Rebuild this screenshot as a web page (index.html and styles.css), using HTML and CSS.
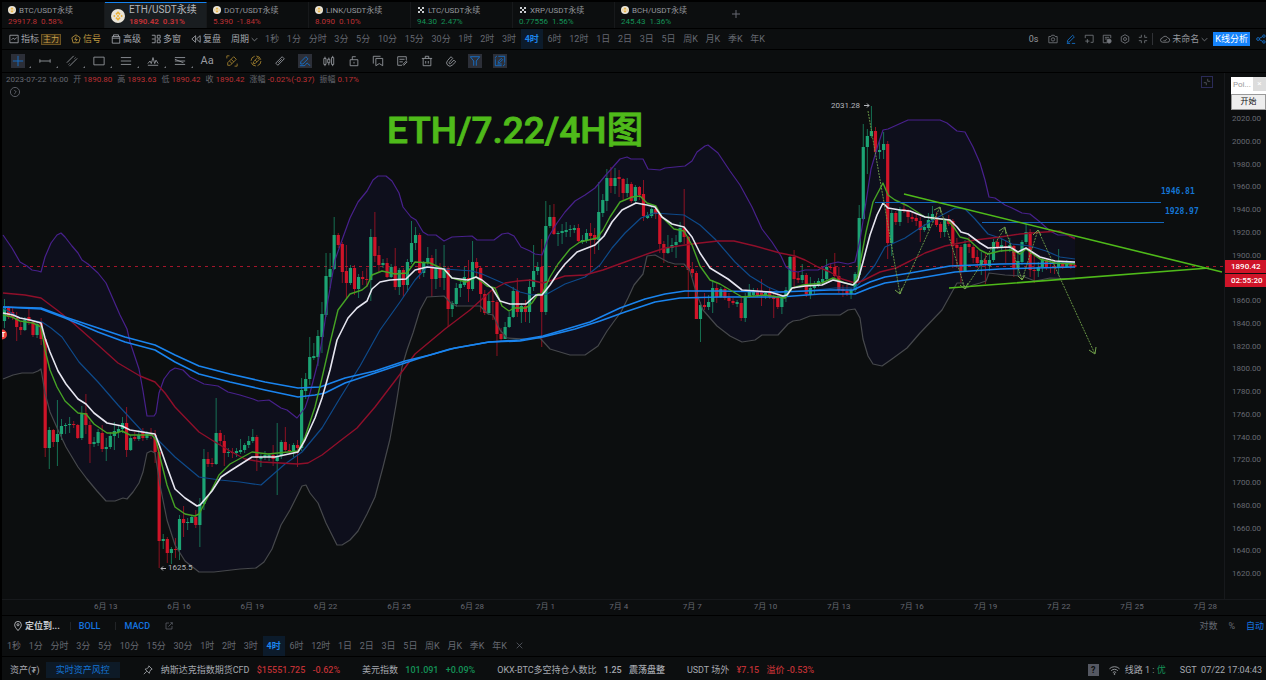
FILE: index.html
```html
<!DOCTYPE html>
<html lang="zh-CN">

<head>
    <meta charset="UTF-8">
    <meta name="viewport" content="width=device-width, initial-scale=1.0">
    <title>ETH/USDT永续</title>
    <link rel="stylesheet" href="styles.css">
</head>

<body>

    <!-- shared icons -->
    <svg class="defs" width="0" height="0">
        <symbol id="coin" viewBox="0 0 16 16">
            <circle cx="8" cy="8" r="8" fill="#e9e4d8" />
            <path d="M8 2.5l3 3-1.3 1.3L8 5.200 6.300 6.800 5 5.500zM8 13.500l3-3-1.300-1.300L8 10.800 6.300 9.200 5 10.500zM8 6.500L9.500 8 8 9.500 6.500 8zM3.800 6.700L5.100 8 3.800 9.300 2.500 8zM12.200 6.700L13.500 8l-1.300 1.300L10.900 8z" fill="#eab038" />
        </symbol>
        <symbol id="okx" viewBox="0 0 16 16">
            <path d="M2 2h4v4H2zM10 2h4v4h-4zM6 6h4v4H6zM2 10h4v4H2zM10 10h4v4h-4z" fill="#c9cccf" />
        </symbol>
        <symbol id="chevron" viewBox="0 0 10 10">
            <path d="M1 3l4 4 4-4" />
        </symbol>
    </svg>

    <nav class="tabs">
        <button class="tab first"><svg class="coin"><use href="#coin" /></svg><span class="pair">BTC/USDT永续</span><span class="quote down">29917.8&nbsp; 0.58%</span></button>
        <button class="tab active"><svg class="coin"><use href="#coin" /></svg><span class="pair">ETH/USDT永续</span><span class="quote down">1890.42&nbsp; 0.31%</span></button>
        <button class="tab"><svg class="coin"><use href="#coin" /></svg><span class="pair">DOT/USDT永续</span><span class="quote down">5.390&nbsp; -1.84%</span></button>
        <button class="tab"><svg class="coin"><use href="#coin" /></svg><span class="pair">LINK/USDT永续</span><span class="quote down">8.090&nbsp; 0.10%</span></button>
        <button class="tab"><svg class="coin"><use href="#okx" /></svg><span class="pair">LTC/USDT永续</span><span class="quote up">94.30&nbsp; 2.47%</span></button>
        <button class="tab"><svg class="coin"><use href="#okx" /></svg><span class="pair">XRP/USDT永续</span><span class="quote up">0.77556&nbsp; 1.56%</span></button>
        <button class="tab last"><svg class="coin"><use href="#coin" /></svg><span class="pair">BCH/USDT永续</span><span class="quote up">245.43&nbsp; 1.36%</span></button>
        <button class="add-tab" aria-label="添加"><svg class="icon" viewBox="0 0 10 10"><path d="M5 1v8M1 5h8" /></svg></button>
    </nav>

    <div class="toolbar">
        <div class="menu">
            <button><svg class="icon" viewBox="0 0 12 12"><path d="M1 1.500h10v9H1zM3 7l2-2 2 1.500L9.500 4" /></svg>指标<span class="main-force">主力</span></button>
            <button class="signal"><svg class="icon" viewBox="0 0 12 12"><path d="M6 1l5 3.500-1.500 6h-7L1 4.500zM6.500 3L4.500 6.500h3L5.500 9" /></svg>信号</button>
            <button><svg class="icon" viewBox="0 0 12 12"><path d="M3 3V1h6v2M1.500 3h9v8h-9zM1.500 5h9" /></svg>高级</button>
            <button><svg class="icon" viewBox="0 0 12 12"><path d="M1 1.500h4v9H1M4.500 6H1M7.500 1.500H11v3.500H7.500zM7.500 7H11v3.500H7.500z" /></svg>多窗</button>
            <button><svg class="icon" viewBox="0 0 12 12"><path d="M5.500 2L1 6l4.500 4zM11 2L6.500 6l4.500 4z" /></svg>复盘</button>
            <button>周期<svg class="icon small"><use href="#chevron" /></svg></button>
        </div>
        <div class="periods">
            <button>1秒</button><button>1分</button><button>分时</button><button>3分</button><button>5分</button><button>10分</button><button>15分</button><button>30分</button><button>1时</button><button>2时</button><button>3时</button><button class="active">4时</button><button>6时</button><button>12时</button><button>1日</button><button>2日</button><button>3日</button><button>5日</button><button>周K</button><button>月K</button><button>季K</button><button>年K</button>
        </div>
        <div class="actions">
            <span class="timer">0s</span>
            <button aria-label="截图"><svg class="icon" viewBox="0 0 12 12"><path d="M1 3h2.500l1-1.500h3l1 1.500H11v7.500H1z" /><circle cx="6" cy="6.500" r="2" /></svg></button>
            <button class="blue" aria-label="画线"><svg class="icon" viewBox="0 0 12 12"><path d="M2 7.500L8 1.500l2 2-6 6-2.500.5zM1 11.300h4M7 11.300h4" /></svg></button>
            <button aria-label="添加窗口"><svg class="icon" viewBox="0 0 12 12"><path d="M1.500 5V1.500H11v8.500H8M4 6v5M1.500 8.500h5" /></svg></button>
            <button aria-label="列表"><svg class="icon" viewBox="0 0 12 12"><path d="M10.500 5V1.500h-9v9H6M3.500 4h5M3.500 6h3" /><circle cx="8.500" cy="8.500" r="2.500" fill="currentColor" /></svg></button>
            <button aria-label="设置"><svg class="icon" viewBox="0 0 12 12"><path d="M6 .8l4.500 2.500v5.400L6 11.200 1.500 8.700V3.300z" /><circle cx="6" cy="6" r="1.800" /></svg></button>
            <button aria-label="全屏"><svg class="icon" viewBox="0 0 12 12"><path d="M1 4h3V1M8 1v3h3M11 8H8v3M4 11V8H1" /></svg></button>
            <button class="layout"><svg class="icon" viewBox="0 0 14 12"><path d="M4 10.500a3 3 0 0 1-.5-6 4 4 0 0 1 7.300 0 3 3 0 0 1-.5 6zM5 7.500l1.500 1.500L9.500 6" /></svg>未命名<svg class="icon small"><use href="#chevron" /></svg></button>
            <button class="analyse">K线分析</button>
            <button class="blue share" aria-label="分享"><svg class="icon" viewBox="0 0 12 12"><circle cx="2.500" cy="6" r="1.700" /><circle cx="9.500" cy="2.500" r="1.500" /><circle cx="9.500" cy="9.500" r="1.500" /><path d="M4 5.200l4-2M4 6.800l4 2" /></svg></button>
        </div>
    </div>

    <div class="drawbar">
        <button class="more on"><svg class="icon" viewBox="0 0 14 14"><path d="M7 1v12M1 7h12" /></svg></button>
        <button class="more"><svg class="icon" viewBox="0 0 14 14"><path d="M1 7h12M1 5v4M13 5v4" /></svg></button>
        <button class="more"><svg class="icon" viewBox="0 0 14 14"><path d="M1 9l8-8M4 13l9-9M3 11l1-1M10 4l1-1" /></svg></button>
        <button class="more"><svg class="icon" viewBox="0 0 14 14"><path d="M1 2.500h12v9H1z" /></svg></button>
        <button class="more"><svg class="icon" viewBox="0 0 14 14"><path d="M1 3h12M1 7h12M1 11h12" /></svg></button>
        <button class="more"><svg class="icon" viewBox="0 0 14 14"><path d="M1 10l2.500-3L5 10l2-7 2 7 1.500-4L13 10M1 12h12" /></svg></button>
        <button class="more"><svg class="icon" viewBox="0 0 14 14"><path d="M1 3h12M1 5l10 4M1 7h12M1 11h12" /></svg></button>
        <div class="tools">
            <button class="text-tool">Aa</button>
            <button class="gold"><svg class="icon" viewBox="0 0 14 14"><path d="M2 9l7-7 3 3-7 7H2zM6 5l3 3M1 4V1h3M10 13h3v-3M4 7l3 3" /></svg></button>
            <button class="gold"><svg class="icon" viewBox="0 0 14 14"><circle cx="7" cy="7" r="5.800" stroke-dasharray="7 2" /><path d="M4 10V8l5-5 2 2-5 5zM6 6l2 2" /></svg></button>
            <button><svg class="icon" viewBox="0 0 14 14"><path d="M2 9.500L9.500 2 12 4.500 4.500 12zM9 5L5 9" /></svg></button>
            <button class="on"><svg class="icon" viewBox="0 0 14 14"><path d="M2 8l6-6 2.500 2.500-6 6H2zM1 12.500h5c2 0 2-3 3.500-3s1 2.500 3.500 2.500" /></svg></button>
            <button><svg class="icon" viewBox="0 0 14 14"><path d="M1 4h2.500v7H1zM5.500 5H8v4H5.500zM10 3h2.500v8H10zM2.300 2v2M2.300 11v2M6.800 3v2M6.800 9v3M11.300 1v2M11.300 11v2" /></svg></button>
            <button><svg class="icon" viewBox="0 0 14 14"><path d="M2.500 5.500h9v7h-9zM5 5.500V2h4M7 8v2" /></svg></button>
            <button><svg class="icon" viewBox="0 0 14 14"><path d="M1.500 10V1.500H10M4.500 4h8v8.500L8.500 10l-4 2.500z" /></svg></button>
            <button><svg class="icon" viewBox="0 0 14 14"><path d="M12 6V2H2v10h5M4 5h6M4 8h4M8 11l4-4 1 1-4 4z" /></svg></button>
            <button><svg class="icon" viewBox="0 0 14 14"><path d="M1 4h12M5 4V1.500h4V4M2.500 4v8.500h9V4M5.500 7v3M8.500 7v3" /></svg></button>
            <button><svg class="icon" viewBox="0 0 14 14"><path d="M7 2L3 6.500a3.800 3.800 0 0 0 5.500 5.300L12.500 8l-2-2-4 4a1 1 0 0 1-1.500-1.500L9 4z" /></svg></button>
            <button class="on"><svg class="icon" viewBox="0 0 14 14"><path d="M1.500 2h11L8.500 7v5.500M5.500 12.500V7l-4-5" /></svg></button>
            <button class="on"><svg class="icon" viewBox="0 0 14 14"><path d="M5 1.500h7.500V9M9 12.500H1.500V5M1.500 4c0-2 1-2.500 2-2.500M12.500 10c0 2-1 2.500-2 2.500M5 7.500L8.500 4l1.500 1.500L6.500 9H5zM4 10.500h5" /></svg></button>
        </div>
    </div>

    <main class="chart">
        <div class="plot">
            <p class="ohlc">2023-07-22 16:00 <span>开 <b>1890.80</b></span> <span>高 <b>1893.63</b></span> <span>低 <b>1890.42</b></span> <span>收 <b>1890.42</b></span> <span>涨幅 <b>-0.02%(-0.37)</b></span> <span>振幅 <b>0.17%</b></span></p>
            <button class="expand" aria-label="展开"><svg class="icon" viewBox="0 0 12 12"><circle cx="6" cy="6" r="5.500" /><path d="M5 3.500L7.500 6 5 8.500" /></svg></button>
            <button class="restore" aria-label="还原"><svg class="icon" viewBox="0 0 14 14"><path d="M2.500 8H6v3.500M8 2.500V6h3.500" /></svg></button>

            <svg class="canvas" viewBox="2 73 1222 526">
                <polygon id="bandFill" />
                <line class="last-price" x1="2" y1="266.5" x2="1224" y2="266.5" />
                <g id="candles"></g>
                <g id="lines"></g>

                <g class="levels">
                    <line x1="875" y1="202.500" x2="1161" y2="202.500" />
                    <line x1="982" y1="222.500" x2="1164" y2="222.500" />
                    <text x="1161" y="194">1946.81</text>
                    <text x="1165" y="214">1928.97</text>
                </g>
                <path class="trend" d="M904 194L1222 272M949 288L1209 268" />
                <path class="forecast" d="M868 111L900 294L940 207L965 289L1005 228L1022 280L1038 230L1095 354" />
                <path class="arrows" d="M895 290l5 4 2-6M934 210l6-3 1 6M960 285l5 4 3-6M999 231l6-4 1 7M1018 276l4 4 3-5M1033 235l5-5 3 5M1089 350l6 4 1-7" />
                <text class="title" x="387" y="143">ETH/7.22/4H图</text>
                <text class="extreme" x="831" y="108">2031.28</text>
                <text class="extreme" x="168" y="570">1625.5</text>
                <path class="pointer" d="M864 105.500h5M867 103.500l2 2-2 2M166 568.500h-5M163 566.500l-2 2 2 2" />
                <circle cx="2" cy="334.500" r="5" fill="#f0413c" />
                <text class="badge" x="1" y="337">T</text>
            </svg>
        </div>
        <div class="price-axis">
            <span>2020.00</span><span>2000.00</span><span>1980.00</span><span>1960.00</span><span>1940.00</span><span>1920.00</span><span>1900.00</span><span></span><span>1860.00</span><span>1840.00</span><span>1820.00</span><span>1800.00</span><span>1780.00</span><span>1760.00</span><span>1740.00</span><span>1720.00</span><span>1700.00</span><span>1680.00</span><span>1660.00</span><span>1640.00</span><span>1620.00</span>
            <div class="price-tag"><b>1890.42</b><b>02:55:20</b></div>
            <div class="popup"><div class="popup-title">Poi...<i>×</i></div><button>开始</button></div>
        </div>
    </main>

    <div class="date-axis">
        <span>6月 13</span><span>6月 16</span><span>6月 19</span><span>6月 22</span><span>6月 25</span><span>6月 28</span><span>7月 1</span><span>7月 4</span><span>7月 7</span><span>7月 10</span><span>7月 13</span><span>7月 16</span><span>7月 19</span><span>7月 22</span><span>7月 25</span><span>7月 28</span>
    </div>

    <div class="bottom-panel">
        <div class="indicators">
            <button class="locate"><svg class="icon" viewBox="0 0 12 12"><path d="M6 11.500C3 8 2 6.500 2 4.500a4 4 0 0 1 8 0c0 2-1 3.500-4 7z" /><circle cx="6" cy="4.500" r="1.300" /></svg>定位到...</button>
            <button class="indicator">BOLL</button>
            <button class="indicator">MACD</button>
            <button class="edit" aria-label="编辑"><svg class="icon" viewBox="0 0 12 12"><path d="M6 1.500H1.500v9h9V6M5 7l6-6M8 1h3v3" /></svg></button>
            <div class="scale">
                <button>对数</button>
                <button>%</button>
                <button class="active">自动</button>
            </div>
        </div>
        <div class="period-row">
            <div class="periods">
                <button>1秒</button><button>1分</button><button>分时</button><button>3分</button><button>5分</button><button>10分</button><button>15分</button><button>30分</button><button>1时</button><button>2时</button><button>3时</button><button class="active">4时</button><button>6时</button><button>12时</button><button>1日</button><button>2日</button><button>3日</button><button>5日</button><button>周K</button><button>月K</button><button>季K</button><button>年K</button>
            </div>
            <button class="close" aria-label="关闭"><svg class="icon small" viewBox="0 0 10 10"><path d="M1 1l8 8M9 1L1 9" /></svg></button>
        </div>
    </div>

    <footer class="status">
        <span class="assets">资产(₮)</span>
        <button class="risk">实时资产风控</button>
        <svg class="icon pin" viewBox="0 0 12 12"><path d="M7 1l4 4-1.500.5L8 8l-.5 2L2.500 5l2-.5L7 2.500zM4.500 7.500L1 11" /></svg>
        <span class="item">纳斯达克指数期货CFD <b class="down">$15551.725</b> <b class="down">-0.62%</b></span>
        <span class="item">美元指数 <b class="up">101.091</b> <b class="up">+0.09%</b></span>
        <span class="item">OKX-BTC多空持仓人数比 <b>1.25</b> <b>震荡盘整</b></span>
        <span class="item">USDT 场外 <b class="down">¥7.15</b> <b class="down">溢价 -0.53%</b></span>
        <div class="status-right">
            <button class="help" aria-label="帮助">?</button>
            <svg class="icon wifi" viewBox="0 0 14 12"><path d="M1 4.500a8.500 8.500 0 0 1 12 0M3 6.800a5.700 5.700 0 0 1 8 0M5 9a3 3 0 0 1 4 0" /><circle cx="7" cy="10.800" r=".6" /></svg>
            <span>线路 1 : <span class="up">优</span></span>
            <span class="clock">SGT&nbsp; 07/22 17:04:43</span>
        </div>
    </footer>

    <script src="chart.js"></script>
</body>

</html>
```
FILE: styles.css
```css
* {
    box-sizing: border-box;
}

body {
    margin: 0;
    padding: 2px 0 0 2px;
    background: #000;
    color: #666972;
    font-family: Roboto, "Noto Sans CJK SC", sans-serif;
    font-size: 9px;
    line-height: 12px;
    overflow-x: hidden;
}

button {
    padding: 0;
    border: 0;
    background: none;
    color: inherit;
    font: inherit;
    white-space: nowrap;
    cursor: pointer;
}

.defs {
    position: absolute;
}

.icon {
    width: 10px;
    height: 10px;
    flex: none;
    fill: none;
    stroke: currentColor;
    overflow: visible;
}

.icon.small {
    width: 7px;
    height: 7px;
}

.up {
    color: #149257;
}

.down {
    color: #be3034;
}

.blue {
    color: #1475d4;
}

/* symbol tabs */
.tabs,
.toolbar,
.drawbar,
.bottom-panel,
.status {
    background: #0c0e0f;
}

.tabs {
    display: flex;
    height: 26px;
    margin-bottom: 1px;
}

.tab {
    display: grid;
    grid-template-columns: 8px auto;
    align-content: center;
    column-gap: 3px;
    width: 102px;
    padding: 1px 0 0 6px;
    font-size: 8px;
    line-height: 11px;
    text-align: left;
    justify-content: start;
    border-right: 1px solid #17191b;
}

.tab.first {
    width: 103px;
}

.tab.last {
    border-right: 0;
}

.tab .coin {
    width: 8px;
    height: 8px;
    align-self: center;
}

.tab .pair {
    color: #94979d;
}

.tab .quote {
    grid-column: 1 / 3;
}

.tab.active {
    grid-template-columns: 14px auto;
    column-gap: 4px;
    padding-top: 0;
    background: #191d20;
    border-top: 1px solid #1583f0;
    line-height: 12px;
}

.tab.active .coin {
    width: 14px;
    height: 14px;
    grid-row: 1 / 3;
}

.tab.active .pair {
    color: #b3b6bb;
    font-size: 10px;
}

.tab.active .quote {
    grid-column: 2;
    font-weight: 700;
}

.add-tab {
    width: 38px;
}

/* period toolbar */
.toolbar {
    display: flex;
    height: 20px;
    margin-bottom: 1px;
}

.menu {
    display: flex;
    align-items: center;
    gap: 10px;
    padding-left: 7px;
    color: #a3a6ad;
}

.menu button {
    display: flex;
    align-items: center;
    gap: 2px;
}

.main-force {
    padding: 0 1px;
    border: 1px solid #6b5220;
    background: #2f2614;
    color: #c9a04a;
    font-size: 8px;
    line-height: 9px;
}

.menu .signal {
    color: #c09a40;
}

.periods {
    display: flex;
    justify-content: space-between;
    width: 506px;
}

.toolbar .periods {
    margin-left: 4px;
}

.periods button {
    padding: 0 3px;
}

.periods .active {
    padding: 0 4px;
    background: #0c1b2b;
    color: #1c85ec;
    font-weight: 700;
}

.actions {
    display: flex;
    align-items: center;
    gap: 8px;
    margin-left: auto;
    color: #74777d;
}

.actions button {
    display: flex;
    align-items: center;
    gap: 2px;
}

.timer {
    margin-right: 2px;
}

.timer,
.layout {
    color: #94979d;
}

.actions .layout {
    margin: 0 -3px 0 -4px;
    padding-left: 7px;
    border-left: 1px solid #303236;
}

.actions .analyse {
    height: 14px;
    padding: 0 2px;
    background: #1583fb;
    color: #fff;
}

.share {
    margin-left: -2px;
}

/* drawing tools */
.drawbar {
    display: flex;
    align-items: center;
    height: 22px;
    margin-bottom: 1px;
    padding-left: 2px;
    color: #989ba1;
}

.drawbar button {
    display: flex;
    justify-content: center;
}

.drawbar .icon {
    width: 14px;
    height: 14px;
    padding: 1px;
}

.more {
    position: relative;
    width: 27px;
}

.more::after {
    content: "";
    position: absolute;
    right: 0;
    bottom: 0;
    border: 1px solid #74777d;
    border-top-color: transparent;
    border-left-color: transparent;
}

.tools {
    display: flex;
    align-items: center;
    width: 317px;
    margin-left: 2px;
}

.tools button {
    flex: 1;
}

.text-tool {
    font-size: 11px;
}

.drawbar .gold {
    color: #a4822f;
}

.drawbar .on {
    color: #1475d4;
}

.drawbar .on .icon {
    background: #2c2f38;
}

/* chart */
.chart {
    display: grid;
    grid-template-columns: 1fr 42px;
    background: #0c0e0f;
}

.plot {
    position: relative;
}

.canvas {
    display: block;
    width: 100%;
    height: auto;
}

.ohlc {
    position: absolute;
    top: 1px;
    left: 4px;
    margin: 0;
    font-size: 8px;
}

.ohlc span {
    margin-left: 3px;
}

.ohlc b {
    color: #be3034;
    font-weight: 400;
}

.expand {
    position: absolute;
    top: 14px;
    left: 8px;
}

.restore {
    position: absolute;
    top: 3px;
    right: 11px;
    height: 12px;
    border: 1px solid #2b2b58;
}

.restore .icon {
    display: block;
}

#bandFill {
    fill: #0e0f1c;
}

.last-price {
    stroke: #a3152a;
    stroke-dasharray: 3 4;
}

.candle-up {
    fill: #1ca474;
}

.candle-down {
    fill: #cf1428;
}

.wick {
    opacity: 0.65;
}

.line {
    fill: none;
    stroke-linejoin: round;
    stroke-width: 1.2;
}

.band-top {
    stroke: #48218c;
}

.band-bottom {
    stroke: #46484c;
}

.band-mid {
    stroke: #0e4a8a;
}

.ma-red {
    stroke: #8f0f2a;
    stroke-width: 1.4;
}

.ma-blue {
    stroke: #1a84ee;
    stroke-width: 1.6;
}

.ma-green {
    stroke: #46a325;
    stroke-width: 1.4;
}

.ma-white {
    stroke: #e6e6f0;
    stroke-width: 1.6;
}

.levels {
    stroke: #1267bd;
}

.levels text {
    fill: #1475d4;
    stroke: none;
    font: 700 8px "DejaVu Sans Mono", monospace;
}

.trend {
    fill: none;
    stroke: #4fba1a;
    stroke-width: 1.6;
}

.forecast,
.arrows {
    fill: none;
    stroke: #71a14b;
}

.forecast {
    stroke-dasharray: 2 1;
    stroke-width: 0.9;
}

.title {
    fill: #4fba1a;
    stroke: #4fba1a;
    stroke-width: 0.8;
    font-size: 37px;
    font-weight: 500;
}

.extreme {
    fill: #b4b7bc;
    font-size: 8px;
}

.pointer {
    fill: none;
    stroke: #b4b7bc;
}

.badge {
    fill: #fff;
    font-size: 7px;
    font-weight: 700;
}

.price-axis {
    position: relative;
    display: flex;
    flex-direction: column;
    justify-content: space-between;
    padding: 40px 0 19px 7px;
    border-left: 1px solid #17191c;
    font-size: 8px;
}

.price-axis span {
    height: 12px;
}

.price-tag {
    position: absolute;
    top: 187px;
    left: 0;
    right: 0;
}

.price-tag b {
    display: block;
    height: 13px;
    margin-bottom: 1px;
    padding-left: 6px;
    background: #cf1428;
    color: #fff;
    font-weight: 500;
    line-height: 14px;
}

.popup {
    position: absolute;
    top: 4px;
    left: 6px;
    right: 0;
    background: #fff;
}

.popup-title {
    display: flex;
    justify-content: space-between;
    height: 17px;
    padding-left: 2px;
    color: #999;
    font-size: 8px;
    line-height: 16px;
}

.popup-title i {
    width: 13px;
    height: 14px;
    background: #dcdcdc;
    color: #fff;
    font-style: normal;
    line-height: 14px;
    text-align: center;
}

.popup button {
    display: block;
    width: 100%;
    height: 16px;
    border: 1px solid #999;
    background: #eee;
    color: #111;
    line-height: 14px;
}

.date-axis {
    display: grid;
    grid-template-columns: repeat(16, 1fr);
    height: 16px;
    margin-bottom: 1px;
    padding: 0 24px 0 67px;
    background: #0c0e0f;
    border-top: 1px solid #17191c;
    font-size: 8px;
    line-height: 14px;
    text-align: center;
}

/* bottom rows */
.bottom-panel {
    margin-bottom: 1px;
}

.indicators {
    display: flex;
    align-items: center;
    height: 20px;
    padding-left: 11px;
}

.locate {
    display: flex;
    align-items: center;
    gap: 2px;
    padding-right: 10px;
    color: #c5c8cd;
    font-weight: 700;
}

.indicator {
    padding: 0 15px 0 8px;
    border-left: 1px solid #222427;
    color: #1475e0;
    font-weight: 500;
    line-height: 8px;
}

.edit .icon {
    display: block;
    width: 8px;
    height: 8px;
}

.scale {
    display: flex;
    gap: 11px;
    margin-left: auto;
    padding-right: 2px;
}

.scale .active {
    color: #1475e0;
}

.period-row {
    display: flex;
    height: 20px;
    padding-left: 2px;
}

.close {
    margin-left: 6px;
}

.status {
    display: flex;
    align-items: center;
    height: 23px;
    padding: 2px 0 0 8px;
    color: #a6a9af;
    white-space: nowrap;
}

.status b {
    margin-left: 5px;
    font-weight: 500;
}

.risk {
    height: 16px;
    margin-left: 6px;
    padding: 0 10px;
    background: #0d1a27;
    color: #1475d4;
}

.pin {
    margin: 0 8px 0 23px;
}

.item {
    margin-right: 22px;
}

.status-right {
    display: flex;
    align-items: center;
    gap: 4px;
    margin-left: auto;
    padding-right: 4px;
}

.help {
    width: 11px;
    height: 12px;
    margin-right: 5px;
    background: #555862;
    color: #0c0e0f;
    font-weight: 700;
}

.wifi {
    width: 13px;
}

.clock {
    margin-left: 10px;
}
```
FILE: chart.js
```javascript
// one candle each: direction, body top, body bottom, high, low
const candles = `
g 307 321 299 328,r 307 317 306 319,r 312 317 308 320,r 318 327 312 341,r 327 330 322 335,g 320 330 317 331,
r 317 321 309 325,r 322 335 320 337,g 324 335 322 338,r 323 339 318 345,r 339 448 337 457,g 430 448 427 469,
r 430 442 429 447,g 434 442 400 466,g 426 434 419 440,g 425 426 423 434,g 424 425 417 433,r 424 425 421 428,
r 425 438 424 439,g 413 438 406 440,r 413 425 394 434,r 425 444 421 463,g 442 444 437 447,g 432 443 429 446,
r 433 449 425 452,g 447 449 438 461,g 436 447 432 449,g 431 436 422 450,g 429 432 426 438,g 423 429 417 433,
r 423 450 407 457,g 438 450 435 451,r 437 439 432 441,g 435 439 430 441,r 432 438 428 441,g 433 438 431 440,
r 433 436 428 439,r 435 452 430 463,r 452 541 447 568,g 539 541 534 549,r 539 553 537 563,g 549 553 547 564,
r 549 550 538 558,g 519 550 515 560,r 519 523 506 537,g 522 523 518 530,g 517 523 516 523,r 517 525 510 528,
g 504 525 498 547,g 459 504 449 510,r 459 464 452 467,r 463 464 458 467,g 433 464 398 465,r 433 441 430 445,
r 441 453 435 466,g 452 453 448 457,r 452 453 448 458,g 451 453 448 457,g 450 452 439 454,g 445 450 443 453,
g 441 445 436 448,g 437 441 429 443,r 437 458 435 471,g 457 459 454 467,g 455 457 451 460,g 455 457 453 461,
r 455 459 445 466,g 456 461 423 495,g 442 456 440 459,r 442 450 427 453,r 450 451 444 454,g 445 451 443 457,
r 445 448 440 467,g 390 448 378 451,g 379 391 373 399,g 357 379 337 385,g 356 358 343 360,g 336 357 330 366,
g 314 337 302 353,g 276 315 253 317,g 269 277 253 288,g 235 269 217 270,r 235 245 233 248,r 244 272 242 283,
r 271 283 245 298,g 268 283 265 285,r 268 289 265 295,g 277 289 274 298,r 277 279 271 285,r 279 280 268 287,
g 237 280 229 301,r 237 256 212 262,r 255 265 246 273,g 263 265 259 268,r 263 277 258 278,g 267 277 264 278,
r 267 287 248 290,g 270 287 268 295,r 270 285 268 297,g 262 285 259 292,g 243 262 221 264,g 235 243 227 250,
r 235 273 233 279,g 263 273 261 277,g 258 263 247 265,r 258 279 255 297,g 267 279 249 289,r 267 278 263 287,
g 268 278 245 290,r 268 309 266 327,g 303 309 301 317,g 288 304 283 307,g 284 288 281 297,g 277 285 267 287,
r 278 289 260 302,g 262 289 241 291,r 262 268 258 277,r 268 294 266 312,r 294 313 290 315,g 301 313 292 315,
r 301 302 288 320,r 302 334 300 356,r 334 339 328 341,g 327 339 322 339,g 317 327 312 328,g 291 317 287 318,
r 291 312 278 317,g 306 312 303 323,r 306 312 300 322,g 287 312 279 323,g 271 287 245 291,g 267 271 262 275,
r 267 312 239 347,g 226 312 201 315,g 217 226 205 228,r 217 234 204 235,g 233 234 231 246,g 231 233 224 244,
g 230 232 222 237,g 229 230 225 237,g 228 230 225 233,r 228 241 224 242,g 240 242 235 244,g 233 240 229 243,
r 233 236 223 273,r 235 240 228 254,g 212 240 182 250,g 200 213 194 217,g 178 201 169 211,r 178 186 167 193,
g 178 186 168 194,r 177 179 170 197,r 179 193 178 200,g 184 193 178 197,r 184 201 182 203,g 187 201 185 203,
r 187 195 186 200,r 194 216 180 221,g 215 218 212 219,g 209 216 207 218,r 209 214 206 219,r 214 244 213 253,
r 244 253 241 263,g 248 253 235 254,g 245 248 238 252,g 242 245 235 258,g 228 242 222 243,r 228 237 189 244,
r 237 270 236 297,r 269 273 262 277,r 273 319 271 319,g 305 319 302 342,r 305 307 293 310,g 302 307 295 310,
g 288 302 280 313,r 288 297 282 303,g 289 297 287 298,r 289 298 287 300,r 298 301 293 308,r 301 303 298 305,
g 302 304 300 307,r 303 318 297 321,g 296 318 293 322,g 292 296 284 298,g 292 295 288 297,r 292 295 288 297,
r 292 296 279 306,g 293 296 291 299,r 293 297 288 299,r 296 299 293 318,r 298 307 293 309,g 297 307 295 314,
g 290 297 287 302,g 257 291 256 292,r 257 279 250 289,r 278 280 272 283,g 275 280 264 283,r 275 294 273 297,
g 288 294 277 299,g 285 288 281 295,g 281 285 278 287,g 279 282 268 284,g 267 279 259 281,r 267 268 263 270,
r 267 276 253 280,r 276 290 267 293,r 289 291 285 297,r 291 294 285 296,g 290 294 288 299,g 274 290 272 292,
g 218 275 205 278,g 147 219 124 220,g 136 147 129 174,g 131 136 106 138,r 131 152 127 155,g 150 152 140 159,
g 144 150 132 159,r 144 243 141 259,g 213 243 210 256,r 213 222 211 225,g 209 222 207 226,r 209 211 203 213,
r 211 217 209 223,r 217 219 213 222,r 218 221 213 226,r 221 230 217 242,g 227 230 224 232,g 220 228 213 230,
g 214 220 206 222,r 217 225 212 227,r 224 232 222 238,g 220 232 218 237,r 220 224 215 226,r 221 246 219 268,
r 245 248 238 268,r 247 271 245 283,g 244 271 240 272,r 244 247 237 253,r 247 258 245 263,r 257 263 250 268,
g 260 264 252 275,r 260 265 253 284,g 260 266 254 271,g 242 260 239 262,r 242 247 239 249,g 245 247 239 252,
r 246 247 240 263,g 245 248 238 252,r 246 268 245 277,g 261 268 253 276,g 242 262 240 265,g 232 242 224 244,
r 232 270 229 277,r 270 271 255 283,g 267 271 262 277,g 260 267 258 272,r 260 268 258 270,r 267 268 262 273,
r 266 268 260 274,g 262 267 249 275,r 263 267 261 269,g 264 267 260 268,r 264 267 262 269,r 265 267 263 268`;

const bandTop = "3,235 12,248 20,262 27,266 32,270 38,271 41,272 45,257 51,243 57,235 61,233 65,237 72,246 78,253 82,260 88,264 98,273 106,283 113,299 120,315 127,329 130,342 135,357 139,369 143,391 147,416 154,416 156,413 159,393 164,379 170,371 175,368 183,370 190,377 204,384 218,386 228,392 240,395 253,399 258,401 269,400 281,408 287,410 297,418 305,408 310,393 318,362 323,335 328,300 335,260 342,240 350,218 358,202 367,191 373,180 378,176 386,176 392,181 399,193 403,207 411,217 416,220 423,232 428,235 436,235 444,241 452,237 472,236 477,240 494,240 502,234 508,233 514,236 521,247 530,251 535,254 542,255 549,236 557,223 565,212 575,201 585,195 595,188 605,176 613,167 620,159 627,157 631,159 643,159 648,169 660,170 665,168 685,166 692,161 697,152 705,146 708,145 718,153 730,171 740,185 752,207 762,229 772,242 781,256 786,267 792,271 798,272 805,270 818,270 829,264 838,262 848,264 855,262 860,240 866,202 871,169 878,145 883,130 888,129 908,120 940,120 947,123 957,131 965,132 973,147 980,163 985,180 989,197 995,198 1005,205 1012,208 1022,213 1030,214 1040,222 1050,231 1058,235 1068,235 1075,238";

const bandBottom = "3,379 13,375 22,373 33,373 38,371 41,369 45,393 50,412 58,430 66,447 78,467 87,479 97,491 106,501 115,501 123,498 127,499 133,492 139,483 143,472 147,453 151,451 155,453 160,485 167,520 175,545 185,561 199,572 214,572 240,569 256,568 264,562 272,549 281,525 290,510 302,486 306,485 310,493 318,503 326,523 337,545 342,545 350,540 358,531 367,514 375,497 383,467 390,439 396,405 402,367 407,350 413,333 420,310 427,297 444,296 452,304 457,306 480,306 488,314 493,315 500,330 507,338 525,339 540,338 550,349 570,355 585,355 598,346 607,331 615,320 621,312 628,298 634,285 643,274 647,256 655,255 668,262 675,264 684,264 690,271 696,292 703,310 717,326 730,336 742,342 755,340 762,335 778,335 788,324 793,321 800,320 810,316 822,315 840,315 848,310 855,309 860,318 863,339 868,356 873,364 882,366 892,359 907,348 920,333 942,310 952,292 957,283 962,283 966,288 973,285 980,283 986,281 989,273 1005,275 1022,276 1035,281 1050,278 1075,279";

const lines = {
    "band-top": bandTop,
    "band-bottom": bandBottom,
    "band-mid": "3,308 20,318 42,322 51,328 62,337 79,362 98,382 118,405 142,431 155,437 175,457 199,477 220,480 240,482 261,485 285,464 302,452 322,428 340,398 360,366 380,330 400,302 415,280 428,266 445,269 472,271 482,274 505,284 520,292 532,295 547,294 565,284 585,277 600,265 612,248 625,233 641,218 654,213 684,215 700,225 715,239 735,262 750,276 768,287 780,292 805,291 835,288 855,288 866,276 875,265 885,247 905,238 920,228 935,219 955,208 965,209 975,219 988,234 1000,238 1012,244 1030,246 1046,251 1060,257 1075,259",
    "ma-red": "3,293 25,295 41,298 57,310 72,322 98,345 118,363 140,376 155,382 165,393 175,407 199,432 215,442 230,451 245,459 262,462 298,464 308,463 322,455 340,441 357,428 375,407 404,369 415,354 445,329 470,310 492,290 505,283 518,281 530,280 543,283 553,280 565,276 585,275 603,270 625,262 650,253 665,248 685,245 700,243 718,241 734,241 755,246 780,253 795,256 805,260 818,267 830,272 842,279 855,283 862,281 880,272 896,268 910,261 925,253 945,246 975,240 1000,237 1020,234 1045,232 1060,231 1075,239",
    "ma-blue slow": "3,307 41,308 65,317 98,328 125,337 155,345 175,355 199,366 230,374 265,382 298,388 320,387 345,378 375,371 405,361 430,355 455,348 489,342 520,340 543,336 560,331 590,322 620,308 645,299 665,294 685,291 718,291 780,292 830,290 853,290 870,282 885,277 910,273 950,266 1000,264 1075,263",
    "ma-blue": "3,307 41,309 65,318 98,332 125,342 155,350 175,362 199,374 230,382 265,390 298,397 315,395 325,393 345,383 375,373 405,363 420,358 450,349 489,342 520,341 543,337 575,329 600,321 625,312 655,302 680,298 720,297 780,297 820,294 855,294 870,288 885,283 920,278 955,272 1000,269 1075,267",
    "ma-green": "3,315 12,317 20,321 33,323 41,327 45,350 50,370 57,387 65,401 78,413 86,414 94,424 107,433 116,433 122,431 130,435 152,435 156,440 160,457 167,485 175,507 185,514 195,516 199,514 210,493 219,475 230,464 252,452 268,454 298,451 305,437 315,407 322,378 330,343 338,310 350,294 362,290 367,286 372,275 382,271 395,274 407,273 415,262 430,263 443,269 452,278 466,282 476,277 482,282 487,286 495,288 502,306 509,311 514,308 526,308 532,303 538,294 542,294 550,277 558,264 570,249 580,242 597,238 603,230 610,217 620,202 632,197 640,196 647,203 656,206 662,217 674,229 684,231 692,245 700,266 710,280 720,284 742,297 765,295 785,298 792,288 803,285 822,283 833,278 845,283 853,285 858,275 866,232 873,202 883,183 888,195 895,200 908,206 925,217 948,220 955,229 960,237 968,239 980,250 988,254 1000,251 1012,250 1020,254 1026,249 1040,259 1055,263 1075,264",
    "ma-white": "3,313 13,315 20,318 30,320 41,323 45,338 50,352 58,371 66,384 78,399 86,404 94,413 107,423 122,426 130,430 155,434 160,447 167,467 175,489 185,498 197,506 200,505 212,491 221,477 230,471 252,457 275,457 298,452 305,440 315,418 322,398 330,370 337,340 348,318 357,308 367,301 372,289 380,282 390,280 406,279 415,270 427,267 444,269 452,278 468,280 476,277 482,280 492,288 500,301 510,304 526,304 536,295 542,295 550,285 558,273 565,264 577,252 595,245 604,236 612,222 622,210 636,203 647,205 655,207 662,217 672,224 684,227 692,237 700,253 710,268 728,279 742,290 770,292 783,296 787,295 792,288 805,286 822,285 833,280 845,283 853,285 858,280 863,262 870,235 877,215 883,203 888,208 900,210 910,211 925,217 950,220 957,227 961,232 968,234 980,243 988,248 1010,247 1018,252 1026,248 1040,257 1055,261 1075,262"
};

function add(parent, tag, attrs) {
    const el = document.createElementNS("http://www.w3.org/2000/svg", tag);
    for (const name in attrs) {
        el.setAttribute(name, attrs[name]);
    }
    parent.appendChild(el);
}

const candleGroup = document.getElementById("candles");
const firstX = 4.5;
const stepX = 4.07;

candles.trim().split(",").forEach((row, i) => {
    const [dir, top, bottom, high, low] = row.trim().split(" ");
    const x = firstX + i * stepX;
    const cls = dir === "g" ? "candle-up" : "candle-down";
    add(candleGroup, "rect", { class: cls + " wick", x: x - 0.5, y: high, width: 1, height: low - high });
    add(candleGroup, "rect", { class: cls, x: x - 1.6, y: top, width: 3.2, height: bottom - top });
});

const lineGroup = document.getElementById("lines");
for (const name in lines) {
    add(lineGroup, "polyline", { class: "line " + name, points: lines[name] });
}

// area between the two bands
const back = bandBottom.split(" ").reverse().join(" ");
document.getElementById("bandFill").setAttribute("points", bandTop + " " + back);
```
